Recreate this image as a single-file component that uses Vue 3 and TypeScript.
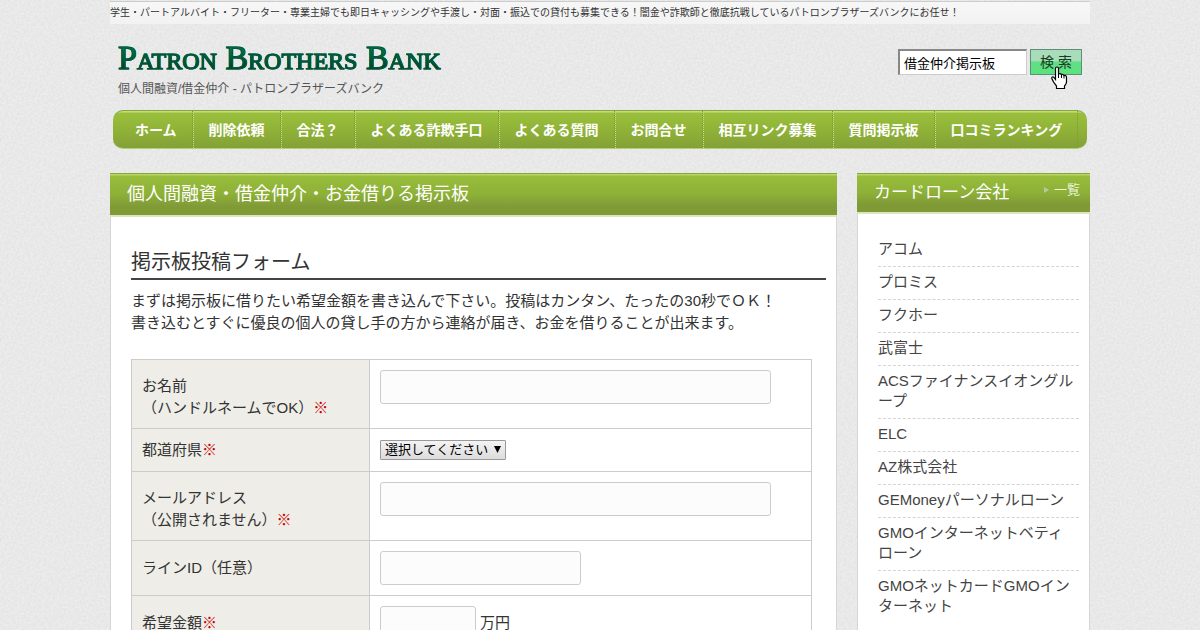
<script setup lang="ts">
import { ref } from 'vue'

interface FormRow {
  id: string
  lines: string[]
  required: boolean
  kind: 'text' | 'select'
  size?: 'wide' | 'medium' | 'small'
  unit?: string
}

const navItems: string[] = [
  'ホーム',
  '削除依頼',
  '合法？',
  'よくある詐欺手口',
  'よくある質問',
  'お問合せ',
  '相互リンク募集',
  '質問掲示板',
  '口コミランキング',
]

const rows: FormRow[] = [
  { id: 'name', lines: ['お名前', '（ハンドルネームでOK）'], required: true, kind: 'text', size: 'wide' },
  { id: 'pref', lines: ['都道府県'], required: true, kind: 'select' },
  { id: 'mail', lines: ['メールアドレス', '（公開されません）'], required: true, kind: 'text', size: 'wide' },
  { id: 'line', lines: ['ラインID（任意）'], required: false, kind: 'text', size: 'medium' },
  { id: 'amount', lines: ['希望金額'], required: true, kind: 'text', size: 'small', unit: '万円' },
]

const companies: string[] = [
  'アコム',
  'プロミス',
  'フクホー',
  '武富士',
  'ACSファイナンスイオングループ',
  'ELC',
  'AZ株式会社',
  'GEMoneyパーソナルローン',
  'GMOインターネットベティローン',
  'GMOネットカードGMOインターネット',
]

const keyword = ref('借金仲介掲示板')
</script>

<template>
  <div class="page" lang="ja">
    <p class="tagline">学生・パートアルバイト・フリーター・専業主婦でも即日キャッシングや手渡し・対面・振込での貸付も募集できる！闇金や詐欺師と徹底抗戦しているパトロンブラザーズバンクにお任せ！</p>

    <header class="header">
      <div class="brand">
        <a class="logo" href="#">Patron Brothers Bank</a>
        <p class="subtitle">個人間融資/借金仲介 - パトロンブラザーズバンク</p>
      </div>
      <form class="search" @submit.prevent>
        <input v-model="keyword" class="search-box" type="text" aria-label="サイト内検索">
        <button class="search-button" type="submit">検 索</button>
        <svg class="pointer" width="17" height="24" viewBox="0 0 17 24" aria-hidden="true">
          <path d="M4.500 13.500V2.500Q4.500 1 6 1T7.500 2.500V8Q9 7 10.500 8.500Q12 7.700 13 9.500Q15.500 9 15.500 11.500V16Q15.500 18 13.500 20V22.500H5.500V20Q2 16 .8 12.500Q.6 10.500 2.500 11Z" fill="#fff" stroke="#000" stroke-width="1.200" />
          <path d="M7.500 8v4M10.500 8.500v3.500M13 9.500v3" stroke="#000" fill="none" />
        </svg>
      </form>
    </header>

    <nav class="nav">
      <ul>
        <li v-for="item in navItems" :key="item"><a href="#">{{ item }}</a></li>
      </ul>
    </nav>

    <div class="columns">
      <main class="panel">
        <h1 class="panel-title">個人間融資・借金仲介・お金借りる掲示板</h1>
        <div class="panel-body">
          <h2>掲示板投稿フォーム</h2>
          <p class="intro">
            まずは掲示板に借りたい希望金額を書き込んで下さい。投稿はカンタン、たったの30秒でＯＫ！<br>
            書き込むとすぐに優良の個人の貸し手の方から連絡が届き、お金を借りることが出来ます。
          </p>
          <form @submit.prevent>
            <table>
              <tbody>
                <tr v-for="row in rows" :key="row.id">
                  <th scope="row" :class="{ double: row.lines.length > 1 }">
                    <label :for="row.id">
                      <template v-for="(line, i) in row.lines" :key="line"><br v-if="i > 0">{{ line }}</template><span v-if="row.required" class="required">※</span>
                    </label>
                  </th>
                  <td>
                    <div class="field">
                      <span v-if="row.kind === 'select'" class="select-wrap">
                        <select :id="row.id">
                          <option>選択してください</option>
                        </select>
                        <svg class="arrow" width="7" height="7" viewBox="0 0 7 7" aria-hidden="true"><path d="M0 0h7L3.500 7z" /></svg>
                      </span>
                      <input v-else :id="row.id" type="text" :class="['entry', row.size]">
                      <span v-if="row.unit">{{ row.unit }}</span>
                    </div>
                  </td>
                </tr>
              </tbody>
            </table>
          </form>
        </div>
      </main>

      <aside class="panel">
        <div class="panel-title side-title">
          <h2>カードローン会社</h2>
          <a href="#"><svg width="5" height="6" viewBox="0 0 5 6" aria-hidden="true"><path d="M0 0l5 3-5 3z" fill="#b9c7a8" /></svg>一覧</a>
        </div>
        <ul class="companies">
          <li v-for="company in companies" :key="company"><a href="#">{{ company }}</a></li>
        </ul>
      </aside>
    </div>
  </div>
</template>

<style>
body {
  margin: 0;
  background: #e9e9e9 url("data:image/svg+xml,%3Csvg xmlns='http://www.w3.org/2000/svg' width='200' height='200'%3E%3Cfilter id='n' color-interpolation-filters='sRGB'%3E%3CfeTurbulence type='fractalNoise' baseFrequency='.45' numOctaves='2' stitchTiles='stitch'/%3E%3CfeColorMatrix values='.07 0 0 0 .877 .07 0 0 0 .877 .07 0 0 0 .877 0 0 0 0 1'/%3E%3C/filter%3E%3Crect width='200' height='200' filter='url(%23n)'/%3E%3C/svg%3E");
}
</style>

<style scoped>
.page {
  max-width: 980px;
  margin: 0 auto;
  color: #333;
  font: 15px/22px "Liberation Sans", "Noto Sans CJK JP", sans-serif;
}

h1,
h2,
p,
ul {
  margin: 0;
  padding: 0;
  font-weight: 400;
}

ul {
  list-style: none;
}

a {
  color: inherit;
  text-decoration: none;
}

.tagline {
  margin-top: 1px;
  padding-top: 1px;
  padding-bottom: 1px;
  border-top: 1px solid #ccc;
  background: linear-gradient(#f7f7f7, #f2f2f2);
  font-size: 10px;
  line-height: 20px;
  white-space: nowrap;
}

.header {
  display: flex;
  justify-content: space-between;
  align-items: flex-start;
  padding: 16px 8px 10px;
}

.logo {
  display: block;
  font: 34px/36px "Liberation Serif", serif;
  font-variant: small-caps;
  color: transparent;
  background: linear-gradient(#007a4d 20%, #003a22 85%);
  background-clip: text;
  -webkit-text-stroke: 1px #00563a;
}

.subtitle {
  margin-top: 3px;
  color: #555;
  font-size: 12px;
  line-height: 21px;
}

.search {
  display: flex;
  gap: 3px;
  position: relative;
  margin-top: 9px;
}

.search-box {
  box-sizing: border-box;
  width: 129px;
  height: 26px;
  padding: 0 4px;
  border: 1px solid #ccc;
  border-top: 2px solid #888;
  border-left: 2px solid #888;
  background: #fff;
  color: #000;
  font: inherit;
  font-size: 13px;
}

.search-button {
  width: 52px;
  height: 26px;
  padding: 0;
  border: 1px solid #5a8f7b;
  background: linear-gradient(#a9dcb9 45%, #63dc86 50%, #5ae37d);
  color: #143c20;
  font: inherit;
  font-size: 14px;
}

.pointer {
  position: absolute;
  right: 14px;
  top: 17px;
}

.nav {
  margin: 0 3px;
  padding: 0 6px;
  border-top: 1px solid #86a83a;
  border-bottom: 1px solid #b4cf72;
  border-radius: 10px;
  background: linear-gradient(#c3dc7c 1px, #9abf3c 2px, #90b337 50%, #84a038);
}

.nav ul {
  display: flex;
}

.nav li {
  border-right: 1px dotted #7c9c33;
  border-left: 1px dotted #c6dc85;
}

.nav li:first-child {
  border-left-color: transparent;
}

.nav a {
  display: block;
  padding: 1px 15px 0;
  color: #fff;
  font-size: 14px;
  font-weight: 700;
  line-height: 36px;
  white-space: nowrap;
}

.columns {
  display: grid;
  grid-template-columns: minmax(0, 1fr) 233px;
  gap: 20px;
  align-items: start;
  margin-top: 24px;
}

.panel {
  min-height: 480px;
  background: #fff;
  box-shadow: inset 0 0 0 1px #d6d6d6;
}

.panel-title {
  padding: 0 17px;
  border-top: 1px solid #86a83a;
  border-bottom: 2px solid #dce5c0;
  background: linear-gradient(#b8d664 1px, #98bd3b 2px, #8db037 50%, #809a37 80%, #7f9b33);
  color: #fff;
  font-size: 18px;
  line-height: 41px;
}

.panel-body {
  padding: 31px 11px 30px 21px;
}

.panel-body h2 {
  padding-bottom: 2px;
  border-bottom: 2px solid #444;
  font-size: 20px;
  line-height: 28px;
}

.intro {
  margin: 10px 0 25px;
}

table {
  width: 681px;
  max-width: 100%;
  border-collapse: collapse;
}

th,
td {
  padding: 10px;
  border: 1px solid #ccc;
  text-align: left;
  font-weight: 400;
}

th {
  box-sizing: border-box;
  width: 238px;
  background: #eeede7;
}

th.double {
  padding: 15px 10px 9px;
}

td {
  vertical-align: top;
}

.required {
  color: #c00;
}

.field {
  display: flex;
  align-items: center;
  gap: 4px;
  min-height: 22px;
}

.entry {
  box-sizing: border-box;
  height: 34px;
  padding: 5px;
  border: 1px solid #ccc;
  border-radius: 3px;
  background: #fcfcfc;
  font: inherit;
}

.wide {
  width: 391px;
}

.medium {
  width: 201px;
}

.small {
  width: 96px;
}

.select-wrap {
  display: flex;
  position: relative;
}

select {
  box-sizing: border-box;
  width: 126px;
  height: 20px;
  padding: 0 4px;
  appearance: none;
  border: 1px solid #999;
  border-radius: 1px;
  background: linear-gradient(#f4f4f4, #dcdcdc);
  color: #000;
  font: inherit;
  font-size: 13px;
  line-height: 18px;
}

.arrow {
  position: absolute;
  right: 5px;
  top: 6px;
}

.side-title {
  display: flex;
  justify-content: space-between;
  padding-right: 10px;
  line-height: 38px;
}

.side-title h2 {
  font-size: 17px;
}

.side-title a {
  display: flex;
  align-items: center;
  gap: 5px;
  height: 32px;
  color: #eef3dc;
  font-size: 13px;
}

.companies {
  padding: 20px 11px 20px 21px;
  color: #444;
  line-height: 20px;
}

.companies li {
  padding: 5px 4px 7px 0;
  border-bottom: 1px dashed #d4d4d4;
}

.companies li:last-child {
  border-bottom: 0;
}
</style>
